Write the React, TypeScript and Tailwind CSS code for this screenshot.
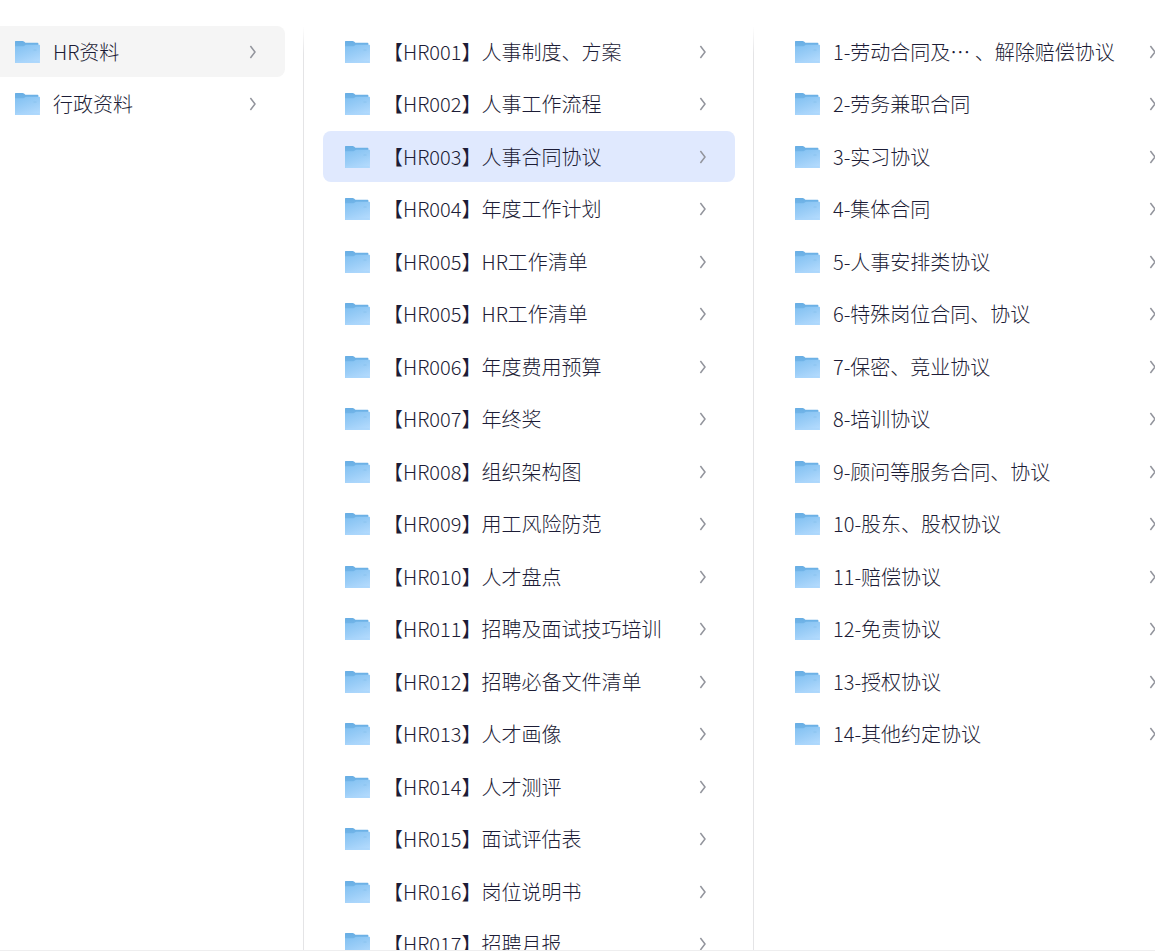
import { useId, useState } from "react";

const rootFolders = ["HR资料", "行政资料"];

const hrFolders = [
  "【HR001】人事制度、方案",
  "【HR002】人事工作流程",
  "【HR003】人事合同协议",
  "【HR004】年度工作计划",
  "【HR005】HR工作清单",
  "【HR005】HR工作清单",
  "【HR006】年度费用预算",
  "【HR007】年终奖",
  "【HR008】组织架构图",
  "【HR009】用工风险防范",
  "【HR010】人才盘点",
  "【HR011】招聘及面试技巧培训",
  "【HR012】招聘必备文件清单",
  "【HR013】人才画像",
  "【HR014】人才测评",
  "【HR015】面试评估表",
  "【HR016】岗位说明书",
  "【HR017】招聘月报",
];

const contractFolders = [
  "1-劳动合同及… 、解除赔偿协议",
  "2-劳务兼职合同",
  "3-实习协议",
  "4-集体合同",
  "5-人事安排类协议",
  "6-特殊岗位合同、协议",
  "7-保密、竞业协议",
  "8-培训协议",
  "9-顾问等服务合同、协议",
  "10-股东、股权协议",
  "11-赔偿协议",
  "12-免责协议",
  "13-授权协议",
  "14-其他约定协议",
];

function FolderIcon() {
  const id = useId();
  return (
    <svg className="h-6 w-[26px] shrink-0" viewBox="0 0 26 24" aria-hidden="true">
      <defs>
        <linearGradient id={`${id}back`} x1="0" y1="0" x2="0" y2="1">
          <stop offset="0" stopColor="#68aee4" />
          <stop offset="1" stopColor="#7dbcec" />
        </linearGradient>
        <linearGradient id={`${id}front`} x1="0.2" y1="0" x2="0.7" y2="1">
          <stop offset="0" stopColor="#84c2f2" />
          <stop offset="0.5" stopColor="#9acdf7" />
          <stop offset="1" stopColor="#b2dafd" />
        </linearGradient>
      </defs>
      <path d="M0 1.6Q0 1 0.6 1H7.6Q8.4 1 9 1.6L10.4 2.8H22.6Q23.4 2.8 23.4 3.6V12H0Z" fill={`url(#${id}back)`} />
      <path d="M0 6.2H8.6L11 4.8H24.4Q25 4.8 25 5.4V23H0Z" fill={`url(#${id}front)`} />
      <path d="M1 22H24" stroke="#a9d5fb" strokeWidth="1" />
      <path d="M18.5 10H21.5" stroke="#86c0ee" strokeWidth="0.8" />
    </svg>
  );
}

function Chevron() {
  return (
    <svg className="h-4 w-2 shrink-0" viewBox="0 0 8 16" fill="none" aria-hidden="true">
      <path d="M1.4 2L6 8L1.4 14" stroke="#92949c" strokeWidth="1.5" />
    </svg>
  );
}

function Divider() {
  return <div className="w-px shrink-0 bg-linear-to-b from-transparent to-[#e4e4e6] to-3%" />;
}

type FolderListProps = {
  label: string;
  items: string[];
  selected: number;
  onSelect: (index: number) => void;
  rowClass: string;
  activeClass: string;
};

function FolderList({ label, items, selected, onSelect, rowClass, activeClass }: FolderListProps) {
  return (
    <ul aria-label={label}>
      {items.map((name, index) => (
        <li key={index} className="odd:mb-px even:mb-0.5">
          <button
            type="button"
            aria-pressed={index === selected}
            onClick={() => onSelect(index)}
            className={`flex h-[51px] w-full items-center gap-3 pr-7 text-left ${rowClass} ${
              index === selected ? activeClass : ""
            }`}
          >
            <FolderIcon />
            <span className="flex-1 whitespace-nowrap">{name}</span>
            <Chevron />
          </button>
        </li>
      ))}
    </ul>
  );
}

export default function App() {
  const [root, setRoot] = useState(0);
  const [hr, setHr] = useState(2);
  const [contract, setContract] = useState(-1);

  return (
    <main className="flex h-screen overflow-hidden border-b border-[#eeeeef] bg-white pt-[26px] font-['Noto_Sans_CJK_SC',sans-serif] text-[20px] leading-7 font-light text-[#1c1c36]">
      <nav className="w-[303px] shrink-0 pr-[18px]">
        <FolderList
          label="资料"
          items={rootFolders}
          selected={root}
          onSelect={setRoot}
          rowClass="rounded-r-lg pl-[15px]"
          activeClass="bg-[#f5f5f5]"
        />
      </nav>
      <Divider />
      <section className="w-[449px] shrink-0 pr-[18px] pl-[19px]">
        <FolderList
          label="HR资料"
          items={hrFolders}
          selected={hr}
          onSelect={setHr}
          rowClass="rounded-lg pl-[22px]"
          activeClass="bg-[#e0e9fe]"
        />
      </section>
      <Divider />
      <section className="w-[449px] shrink-0 pr-[18px] pl-[19px]">
        <FolderList
          label="人事合同协议"
          items={contractFolders}
          selected={contract}
          onSelect={setContract}
          rowClass="rounded-lg pl-[22px]"
          activeClass="bg-[#e0e9fe]"
        />
      </section>
    </main>
  );
}
